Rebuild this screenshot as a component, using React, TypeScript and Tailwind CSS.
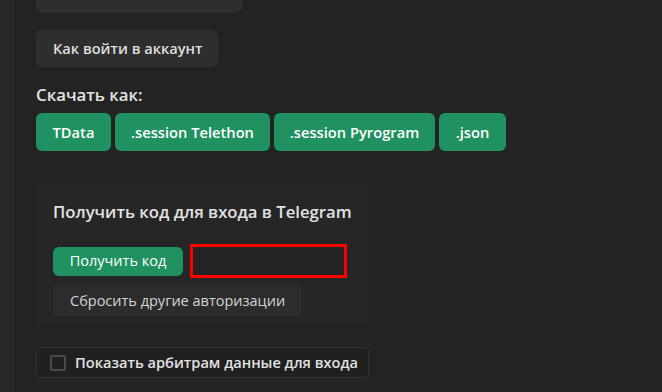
export default function App() {
  return (
    <div className="w-[662px] h-[392px] overflow-hidden bg-[#232323] flex" style={{ fontFamily: '"Open Sans", sans-serif' }}>
      <div className="w-[14px] shrink-0 bg-[#282828]" />
      <div className="flex flex-col pl-[22px] relative">
        <div className="w-[206px] h-[44px] -mt-[31px] rounded-md bg-[#2e2e2e]" />
        <div className="mt-[17px] h-[37px] w-[182px] rounded-md bg-[#2e2e2e] flex items-center pl-[17px] text-[14.6px] font-semibold text-[#dedede]">
          Как войти в аккаунт
        </div>
        <div className="mt-[17px] text-[16.8px] font-semibold text-[#e2e2e2] leading-[22px]">Скачать как:</div>
        <div className="mt-[7px] flex gap-[4px]">
          {[
            ['TData', 'w-[75px]'],
            ['.session Telethon', 'w-[155px]'],
            ['.session Pyrogram', 'w-[161px]'],
            ['.json', 'w-[67px]'],
          ].map(([t, w]) => (
            <div key={t} className={`${w} h-[38px] rounded-md bg-[#209160] flex items-center justify-center text-[14.7px] font-semibold text-white`}>
              {t}
            </div>
          ))}
        </div>
        <div className="mt-[32px] w-[332px] h-[141px] bg-[#262626] pl-[17px] pt-[18px]">
          <div className="text-[16.7px] font-semibold text-[#e2e2e2] leading-[22px]">Получить код для входа в Telegram</div>
          <div className="mt-[21px] flex items-center gap-[7px]">
            <div className="w-[130px] h-[29px] rounded-md bg-[#209160] flex items-center justify-center text-[14.5px] text-white">
              Получить код
            </div>
            <div className="w-[157px] h-[34px] border-[3px] border-[#ff0000] bg-[#242424]" />
          </div>
          <div className="mt-[7px] w-[248px] h-[31px] bg-[#2c2c2c] flex items-center pl-[17px] text-[14.5px] text-[#d4d4d4]">
            Сбросить другие авторизации
          </div>
        </div>
        <div className="mt-[23px] w-[333px] h-[31px] border border-[#333333] rounded-sm bg-[#202020] flex items-center pl-[13px] gap-[9px]">
          <div className="w-[16px] h-[16px] border-2 border-[#4a4a4a] rounded-[2px]" />
          <span className="text-[14.6px] font-semibold text-[#e2e2e2]">Показать арбитрам данные для входа</span>
        </div>
      </div>
    </div>
  );
}
